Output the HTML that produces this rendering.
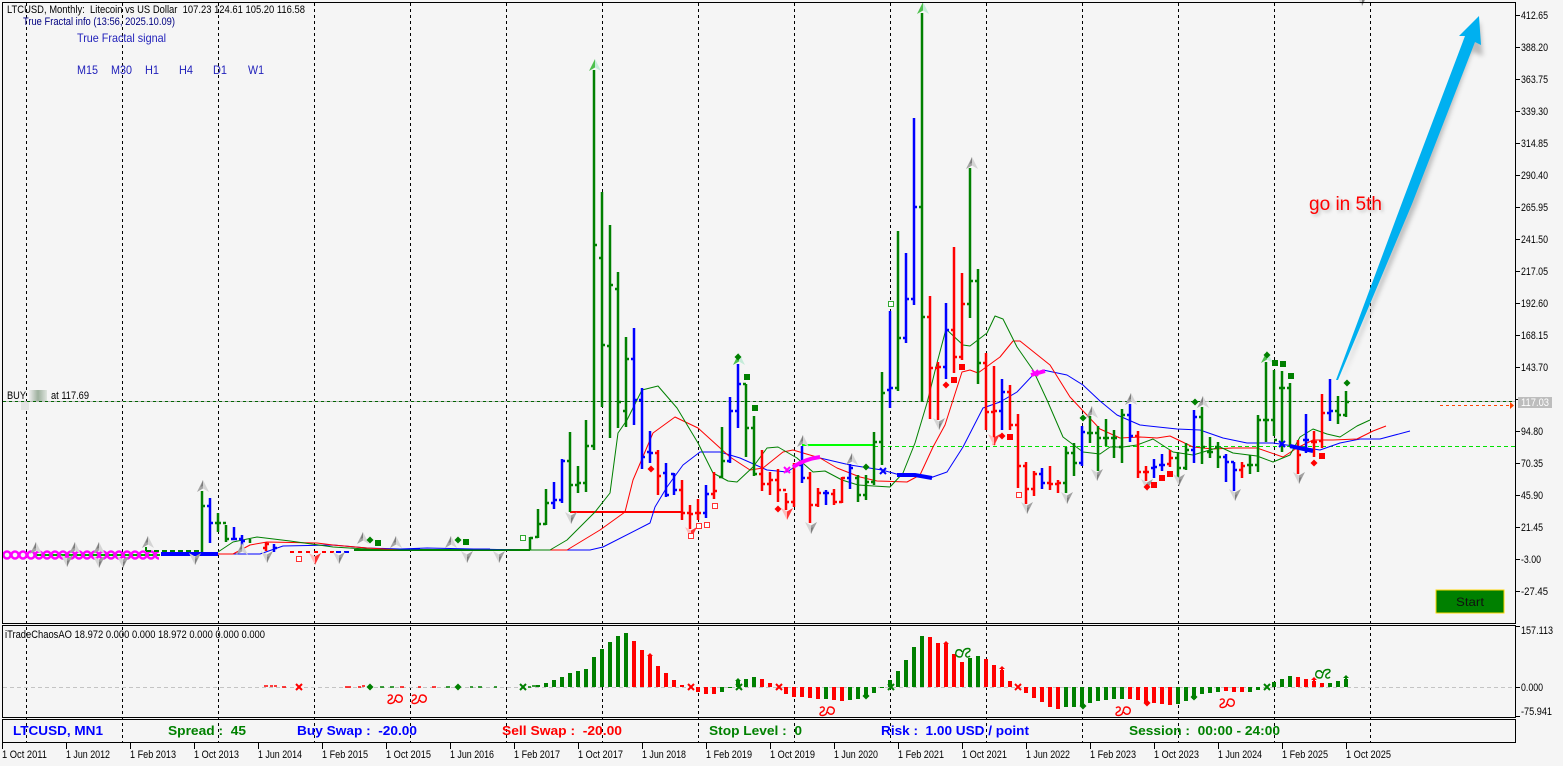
<!DOCTYPE html>
<html><head><meta charset="utf-8"><title>LTCUSD</title>
<style>
html,body{margin:0;padding:0;background:#f5f5f5}
svg{display:block}
text{font-family:"Liberation Sans",sans-serif;white-space:pre}
.a{font-size:11px;fill:#000}
.b{font-size:13px;font-weight:bold}
</style></head><body>
<svg width="1563" height="766" viewBox="0 0 1563 766" xmlns="http://www.w3.org/2000/svg">
<defs>
<g id="u"><polygon points="0,-6 -6,6 0,2.5" fill="#a4a4a4"/><polygon points="0,-6 6,6 0,2.5" fill="#d4d4d4"/><polygon points="0,-6 -2.5,1 0,0" fill="#7c7c7c"/></g>
<g id="d"><polygon points="0,6 -6,-6 0,-2.5" fill="#d4d4d4"/><polygon points="0,6 6,-6 0,-2.5" fill="#a0a0a0"/><polygon points="0,6 2.5,-1 0,0" fill="#7c7c7c"/></g>
<g id="ug"><polygon points="0,-6 -6,6 0,2.5" fill="#4cc04c"/><polygon points="0,-6 6,6 0,2.5" fill="#c4ecd8"/></g>
<g id="dr"><polygon points="0,6 -6,-6 0,-2.5" fill="#ffbcbc"/><polygon points="0,6 6,-6 0,-2.5" fill="#f33"/></g>
<polygon id="dm" points="0,-3.5 3.5,0 0,3.5 -3.5,0"/>
<rect id="sq" x="-3" y="-3" width="6" height="6"/>
<rect id="hs" x="-2.5" y="-2.5" width="5" height="5" fill="#fff" stroke-width="1"/>
<path id="q" d="M-7-3C-5-5-2-4-3-1-4 1-7 1-7 3-7 5-3 5-1 3 1 0 0-4 3-4 6-4 8-2 7 1 6 4 2 4 1 1" fill="none" stroke-width="1.4"/>
<path id="x" d="M-3-3L3 3M3-3L-3 3" fill="none" stroke-width="2"/>
<path id="ua" d="M0-4L3-1H1V3H-1V-1H-3Z"/>
<pattern id="c" width="8" height="12" patternUnits="userSpaceOnUse" x="3" y="549"><circle cx="4" cy="6" r="3.5" fill="none" stroke="#f0f" stroke-width="2.4"/></pattern>
<linearGradient id="g1" x1="0" x2="1"><stop offset="0" stop-color="#eee"/><stop offset=".5" stop-color="#9db09d"/><stop offset="1" stop-color="#dfe5df"/></linearGradient>
<filter id="bl" x="-20%" y="-20%" width="140%" height="140%"><feGaussianBlur stdDeviation="2.5"/></filter>
<filter id="bl2" x="-20%" y="-40%" width="140%" height="180%"><feGaussianBlur stdDeviation="1.5"/></filter>
</defs>

<rect width="1563" height="766" fill="#f5f5f5"/>

<!-- vertical grid -->
<path stroke="#000" stroke-width="1" stroke-dasharray="3 3" fill="none" d="M26.5 3V742M122.5 3V742M218.5 3V742M314.5 3V742M410.5 3V742M506.5 3V742M602.5 3V742M698.5 3V742M794.5 3V742M890.5 3V742M986.5 3V742M1082.5 3V742M1178.5 3V742M1274.5 3V742M1370.5 3V742"/>

<!-- horizontals -->
<path d="M3 401.5H1515" stroke="#b4b4b4" fill="none"/>
<path d="M3 401.5H1515" stroke="#006400" stroke-dasharray="3 3" fill="none"/>
<path d="M874 446.5H1515" stroke="#00e000" stroke-dasharray="4 3" fill="none"/>
<path d="M802 445H874" stroke="#0f0" stroke-width="2" fill="none"/>
<path d="M570 512H682" stroke="#f00" stroke-width="2" fill="none"/>
<path d="M1440 405.5H1510" stroke="#ff4500" stroke-dasharray="3 3" fill="none"/>
<polygon points="1510,402 1514,405.5 1510,409" fill="#ff4500"/>

<!-- flat section -->
<path d="M354 550H530" stroke="#008000" stroke-width="2" fill="none"/>

<!-- moving averages -->
<g fill="none" stroke-width="1" stroke-linejoin="round">
<path stroke="#0000ff" d="M218 554H260L283 546 333 545 367 548 400 549 427 548 520 550H590L603 547 650 523 655 507 667 487 683 465 700 452H720L740 458 767 470 787 472 802 462 820 458 850 465 882 470 900 475 930 478 947 472 963 447 983 408 1000 402 1017 392 1033 375 1043 370 1067 375 1083 385 1100 401 1117 415 1140 425 1177 429 1200 430 1223 438 1247 443H1273L1300 447 1320 450 1340 443 1360 439H1380L1410 431"/>
<path stroke="#ff0000" d="M218 554H233L250 545 267 542 317 543 333 545 367 548 400 550H540L567 550 600 530 625 512 633 480 653 433 675 417 698 428 730 457 750 470 763 468 783 452 793 450 820 458 837 468 860 477 877 481 907 482 920 475 933 447 945 425 962 372 970 370 978 373 1000 357 1013 341H1020L1050 365 1070 397 1100 429 1120 438 1140 437 1157 438 1170 436 1193 447 1213 449 1233 448H1257L1283 457 1297 448 1313 440H1333L1357 439 1373 431 1386 426"/>
<path stroke="#008000" d="M218 552L233 542 257 537 290 541 333 547 383 550H550L567 540 595 512 610 493 618 433 627 420 642 390 658 386 677 408 698 443 713 473 728 481 737 482 753 467 767 448 778 447 797 458 813 472 825 471 842 480 858 485 890 487 903 473 915 443 927 403 937 363 946 329 963 345 970 346 987 333 995 316 1003 319 1017 347 1033 370 1047 400 1063 437 1083 452 1100 454 1110 447H1123L1137 445 1153 439 1173 452 1193 455 1220 447 1233 453 1257 456 1273 462 1290 455 1300 437 1313 429 1327 434 1340 437 1357 426 1370 420"/>
</g>

<path d="M35 555H160" stroke="#0a0" stroke-width="2" fill="none"/>
<rect x="3" y="549" width="156" height="12" fill="url(#c)"/>
<path d="M161 554H218" stroke="#00f" stroke-width="4" fill="none"/>
<path d="M146 551H200" stroke="#008000" stroke-width="2" stroke-dasharray="5 3" fill="none"/>
<path d="M146 547V551" stroke="#008000" stroke-width="2" fill="none"/>
<path d="M290 552H336" stroke="#f00" stroke-width="2" stroke-dasharray="4 4" fill="none"/>
<path d="M336 552H350" stroke="#00f" stroke-width="2" stroke-dasharray="5 3" fill="none"/>
<path d="M400 549H420M470 549H490" stroke="#00f" stroke-width="1" fill="none"/>

<!-- OHLC bars -->
<g fill="none" stroke-width="2.5">
<path stroke="#008000" d="M202 491V552M202 506h3M218 513V532M215 523h3M218 523h3M226 525V542M223 523h3M226 539h3M250 539V543M530 537V550M530 538h3M538 509V538M535 537h3M538 524h3M546 489V525M543 524h3M546 503h3M570 432V512M567 461h3M570 485h3M578 466V493M575 485h3M578 483h3M586 420V492M583 483h3M586 446h3M594 70V450M591 446h3M594 245h3M602 192V407M599 258h3M602 345h3M610 225V438M607 346h3M610 285h3M618 272V428M615 289h3M618 402h3M626 337V427M623 411h3M626 359h3M722 427V478M719 477h3M722 461h3M746 384V457M743 384h3M746 428h3M754 416V476M751 428h3M754 474h3M858 475V502M855 478h3M858 495h3M866 475V500M863 495h3M866 482h3M874 432V485M871 482h3M874 442h3M882 372V465M879 442h3M882 393h3M898 231V391M895 388h3M898 338h3M922 13V402M919 207h3M922 317h3M970 168V318M967 304h3M970 281h3M978 269V384M975 281h3M978 363h3M1066 447V493M1063 483h3M1066 453h3M1074 443V476M1071 453h3M1074 463h3M1090 416V443M1087 433h3M1090 433h3M1098 426V471M1095 433h3M1098 438h3M1106 419V446M1103 438h3M1106 438h3M1114 430V458M1111 438h3M1114 438h3M1122 409V463M1119 447h3M1122 415h3M1178 452V477M1175 458h3M1178 468h3M1186 443V470M1183 468h3M1186 450h3M1202 407V464M1199 417h3M1202 447h3M1210 437V458M1207 452h3M1210 452h3M1218 442V468M1215 447h3M1218 457h3M1250 455V474M1247 465h3M1250 465h3M1258 415V472M1255 465h3M1258 420h3M1266 362V442M1263 420h3M1266 420h3M1274 370V436M1271 420h3M1274 440h3M1282 371V452M1279 388h3M1282 388h3M1290 383V447M1287 388h3M1290 447h3M1338 396V424M1335 411h3M1338 415h3M1346 391V417M1343 415h3M1346 402h3"/>
<path stroke="#0000ff" d="M210 498V543M207 506h3M210 523h3M234 527V540M231 539h3M234 539h3M242 535V546M239 539h3M242 541h3M274 544V552M274 548h3M554 482V509M551 503h3M554 500h3M562 459V503M559 500h3M562 461h3M634 328V425M631 359h3M634 400h3M642 388V469M639 400h3M642 457h3M650 431V463M647 452h3M650 453h3M666 463V497M663 473h3M666 495h3M674 473V495M671 474h3M674 490h3M706 485V518M703 513h3M706 494h3M730 397V463M727 461h3M730 411h3M738 364V428M735 411h3M738 384h3M802 446V483M799 465h3M802 478h3M826 490V505M823 493h3M826 493h3M850 464V489M847 478h3M850 468h3M890 311V408M887 390h3M890 388h3M906 253V343M903 338h3M906 299h3M914 118V305M911 299h3M914 207h3M946 303V379M943 367h3M946 330h3M1002 379V430M999 411h3M1002 392h3M1042 468V489M1039 474h3M1042 483h3M1082 426V466M1079 463h3M1082 432h3M1130 404V442M1127 415h3M1130 436h3M1154 459V478M1151 468h3M1154 467h3M1162 454V471M1159 465h3M1162 465h3M1194 410V463M1191 450h3M1194 417h3M1226 454V482M1223 457h3M1226 462h3M1234 462V491M1231 462h3M1234 470h3M1306 414V453M1303 440h3M1306 440h3M1330 379V421M1327 413h3M1330 411h3"/>
<path stroke="#ff0000" d="M266 542V551M263 548h3M266 544h3M658 450V495M655 453h3M658 476h3M682 480V520M679 490h3M682 513h3M690 505V529M687 513h3M690 514h3M698 499V520M695 513h3M698 513h3M714 472V499M711 494h3M714 491h3M762 450V491M759 474h3M762 484h3M770 472V495M767 484h3M770 480h3M778 469V502M775 480h3M778 490h3M786 493V510M783 490h3M786 502h3M794 463V507M791 502h3M794 465h3M810 472V523M807 478h3M810 505h3M818 488V507M815 505h3M818 493h3M834 489V505M831 494h3M834 502h3M842 477V503M839 502h3M842 478h3M930 296V419M927 317h3M930 368h3M938 362V420M935 368h3M938 367h3M954 247V373M951 330h3M954 357h3M962 273V360M959 357h3M962 304h3M986 353V430M983 363h3M986 412h3M994 366V445M991 412h3M994 411h3M1010 385V430M1007 392h3M1010 425h3M1018 414V488M1015 425h3M1018 466h3M1026 462V504M1023 466h3M1026 489h3M1034 471V496M1031 489h3M1034 474h3M1050 466V490M1047 483h3M1050 484h3M1058 480V493M1055 484h3M1058 483h3M1138 431V478M1135 436h3M1138 472h3M1146 466V481M1143 472h3M1146 472h3M1170 450V467M1167 464h3M1170 458h3M1242 462V478M1239 470h3M1242 466h3M1298 440V474M1295 447h3M1298 455h3M1314 431V457M1311 442h3M1314 442h3M1322 394V448M1319 441h3M1322 413h3"/>
</g>

<!-- thick highlights -->
<path d="M793 467Q805 459 820 457" stroke="#f0f" stroke-width="4" fill="none"/>
<use href="#x" x="787" y="470" stroke="#f0f"/>
<use href="#x" x="1035" y="373" stroke="#f0f"/>
<path d="M1031 375L1045 371" stroke="#f0f" stroke-width="4" fill="none"/>
<use href="#x" x="883" y="471" stroke="#00f"/>
<path d="M897 475H915L932 478" stroke="#00f" stroke-width="4" fill="none"/>
<use href="#x" x="1282" y="444" stroke="#00f"/>
<path d="M1290 446L1313 451" stroke="#00f" stroke-width="4" fill="none"/>

<!-- fractal arrows -->
<use href="#u" x="36" y="548"/><use href="#u" x="75" y="548"/><use href="#u" x="99" y="548"/><use href="#u" x="148" y="542"/><use href="#u" x="203" y="486"/><use href="#u" x="242" y="549"/><use href="#u" x="363" y="538"/><use href="#u" x="396" y="542"/><use href="#u" x="451" y="542"/><use href="#u" x="803" y="441"/><use href="#u" x="972" y="163"/><use href="#u" x="852" y="459"/><use href="#u" x="1092" y="412"/><use href="#u" x="1131" y="399"/><use href="#u" x="1203" y="402"/>
<use href="#d" x="67" y="561"/><use href="#d" x="99" y="562"/><use href="#d" x="123" y="562"/><use href="#d" x="195" y="559"/><use href="#d" x="267" y="557"/><use href="#d" x="339" y="558"/><use href="#d" x="467" y="557"/><use href="#d" x="499" y="557"/><use href="#d" x="571" y="518"/><use href="#d" x="811" y="528"/><use href="#d" x="939" y="424"/><use href="#d" x="1027" y="508"/><use href="#d" x="1067" y="498"/><use href="#d" x="1097" y="475"/><use href="#d" x="1147" y="485"/><use href="#d" x="1179" y="480"/><use href="#d" x="1235" y="495"/><use href="#d" x="1299" y="478"/><use href="#d" x="1362" y="0"/>
<use href="#ug" x="595" y="65"/><use href="#ug" x="923" y="8"/><use href="#ug" x="739" y="359"/><use href="#ug" x="1267" y="357"/>
<use href="#dr" x="315" y="559"/><use href="#dr" x="691" y="533"/><use href="#dr" x="787" y="514"/><use href="#dr" x="994" y="440"/>

<!-- markers -->
<g fill="#008000">
<use href="#dm" x="370" y="540"/><use href="#dm" x="458" y="540"/><use href="#dm" x="738" y="357"/><use href="#dm" x="866" y="467"/><use href="#dm" x="1083" y="418"/><use href="#dm" x="1195" y="402"/><use href="#dm" x="1267" y="355"/><use href="#dm" x="1347" y="383"/>
<use href="#sq" x="378" y="543"/><use href="#sq" x="466" y="542"/><use href="#sq" x="747" y="377"/><use href="#sq" x="755" y="408"/><use href="#sq" x="1275" y="363"/><use href="#sq" x="1283" y="364"/><use href="#sq" x="1291" y="376"/>
</g>
<g fill="#f00">
<use href="#dm" x="651" y="469"/><use href="#dm" x="778" y="509"/><use href="#dm" x="946" y="385"/><use href="#dm" x="1002" y="436"/><use href="#dm" x="1147" y="487"/><use href="#dm" x="1314" y="463"/>
<use href="#sq" x="954" y="380"/><use href="#sq" x="962" y="367"/><use href="#sq" x="1010" y="437"/><use href="#sq" x="1154" y="485"/><use href="#sq" x="1162" y="478"/><use href="#sq" x="1170" y="474"/><use href="#sq" x="1322" y="456"/>
</g>
<g stroke="#f33">
<use href="#hs" x="299" y="559"/><use href="#hs" x="691" y="536"/><use href="#hs" x="699" y="526"/><use href="#hs" x="707" y="525"/><use href="#hs" x="715" y="506"/><use href="#hs" x="1019" y="495"/>
</g>
<g stroke="#3a3">
<use href="#hs" x="523" y="538"/><use href="#hs" x="891" y="304"/>
</g>

<!-- AO histogram -->
<path d="M3 687.5H1515" stroke="#c4c4c4" stroke-dasharray="4 3" fill="none"/>
<g fill="none" stroke-width="4">
<path stroke="#008000" d="M538 687V685M546 687V683M554 687V680M562 687V677M570 687V673M578 687V671M586 687V669M594 687V657M602 687V649M610 687V642M618 687V636M626 687V633M722 687V692M730 687V688M738 687V680M746 687V679M754 687V677M826 687V699M850 687V700M858 687V699M866 687V695M874 687V693M882 687V688M890 687V680M898 687V671M906 687V660M914 687V647M922 687V636M970 687V658M978 687V656M1066 687V707M1074 687V707M1082 687V706M1090 687V703M1098 687V701M1106 687V700M1114 687V699M1122 687V699M1178 687V704M1186 687V701M1194 687V699M1202 687V694M1210 687V693M1218 687V692M1250 687V692M1258 687V690M1274 687V682M1282 687V679M1290 687V676M1330 687V683M1338 687V681M1346 687V679"/>
<path stroke="#ff0000" d="M634 687V641M642 687V650M650 687V655M658 687V666M666 687V673M674 687V680M682 687V685M698 687V692M706 687V694M714 687V694M762 687V679M770 687V683M786 687V694M794 687V697M802 687V697M810 687V698M818 687V699M834 687V700M842 687V701M930 687V637M938 687V643M946 687V644M954 687V654M962 687V662M986 687V659M994 687V665M1002 687V670M1010 687V681M1026 687V693M1034 687V698M1042 687V702M1050 687V707M1058 687V709M1130 687V699M1138 687V700M1146 687V703M1154 687V703M1162 687V704M1170 687V705M1226 687V691M1234 687V692M1242 687V692M1298 687V677M1306 687V679M1314 687V681M1322 687V683"/>
</g>
<path d="M264 686h4M270 686h3M274 686h3M282 687h4M345 687h6M358 687h3M362 686h3M400 687h4M418 687h3M432 687h4" stroke="#f00" fill="none" stroke-width="1.5"/>
<path d="M380 687h4M390 687h4M446 687h4M470 687h3M478 687h4M494 687h3M528 687h3M532 686h4" stroke="#008000" fill="none" stroke-width="1.5"/>
<g stroke="#f00"><use href="#x" x="299" y="687"/><use href="#x" x="691" y="687"/><use href="#x" x="779" y="687"/><use href="#x" x="1018" y="687"/></g>
<g stroke="#008000"><use href="#x" x="523" y="687"/><use href="#x" x="739" y="687"/><use href="#x" x="891" y="687"/><use href="#x" x="1267" y="687"/></g>
<g fill="#008000"><use href="#dm" x="370" y="687"/><use href="#dm" x="458" y="687"/><use href="#dm" x="866" y="696"/><use href="#dm" x="1083" y="706"/><use href="#dm" x="1194" y="697"/><use href="#ua" x="738" y="682"/><use href="#ua" x="1346" y="679"/></g>
<g fill="#f00"><use href="#ua" x="650" y="657"/><use href="#ua" x="946" y="645"/><use href="#ua" x="1002" y="670"/><use href="#ua" x="1314" y="681"/><use href="#dm" x="1147" y="703"/></g>
<g stroke="#f00"><use href="#q" x="395" y="699"/><use href="#q" x="419" y="699"/><use href="#q" x="827" y="711"/><use href="#q" x="1123" y="711"/><use href="#q" x="1227" y="703"/></g>
<g stroke="#008000"><use href="#q" transform="translate(963 653) rotate(180)"/><use href="#q" transform="translate(1323 674) rotate(180)"/></g>

<!-- frames -->
<g fill="none" stroke="#000" stroke-width="1">
<rect x="2.5" y="2.5" width="1513" height="621"/>
<rect x="2.5" y="625.5" width="1513" height="92"/>
<rect x="2.5" y="719.5" width="1513" height="23"/>
<path d="M1516 15.5h4M1516 47.5h4M1516 79.5h4M1516 111.5h4M1516 143.5h4M1516 175.5h4M1516 207.5h4M1516 239.5h4M1516 271.5h4M1516 303.5h4M1516 335.5h4M1516 367.5h4M1516 399.5h4M1516 431.5h4M1516 463.5h4M1516 495.5h4M1516 527.5h4M1516 559.5h4M1516 591.5h4M1516 626.5h4M1516 687.5h4M1516 716.5h4"/>
<path d="M2.5 743V749M66.5 743V749M130.5 743V749M194.5 743V749M258.5 743V749M322.5 743V749M386.5 743V749M450.5 743V749M514.5 743V749M578.5 743V749M642.5 743V749M706.5 743V749M770.5 743V749M834.5 743V749M898.5 743V749M962.5 743V749M1026.5 743V749M1090.5 743V749M1154.5 743V749M1218.5 743V749M1282.5 743V749M1346.5 743V749"/>
</g>

<!-- arrow -->
<polygon points="1340,384 1417,204 1472,52 1483,56 1480,22 1464,40 1470,44" fill="#777" opacity=".45" filter="url(#bl)"/>
<polygon points="1336,380 1403,200 1465,36 1459,36 1479,16 1481,45 1475,42 1412,204 1338,380" fill="#00b0f0"/>

<text x="1311" y="212" font-size="19" fill="#888" opacity=".5" filter="url(#bl2)">go in 5th</text>
<text x="1309" y="210" font-size="19" fill="#ff0000" textLength="73" lengthAdjust="spacingAndGlyphs">go in 5th</text>

<!-- top texts -->
<text class="a" x="7" y="13" textLength="298" lengthAdjust="spacingAndGlyphs">LTCUSD, Monthly:  Litecoin vs US Dollar  107.23 124.61 105.20 116.58</text>
<text class="a" x="23" y="25" textLength="152" lengthAdjust="spacingAndGlyphs" style="fill:#000080">True Fractal info (13:56, 2025.10.09)</text>
<g font-size="12" fill="#2222bb">
<text x="77" y="42" textLength="89" lengthAdjust="spacingAndGlyphs">True Fractal signal</text>
<text x="77" y="74" textLength="21" lengthAdjust="spacingAndGlyphs">M15</text>
<text x="111" y="74" textLength="21" lengthAdjust="spacingAndGlyphs">M30</text>
<text x="145" y="74" textLength="14" lengthAdjust="spacingAndGlyphs">H1</text>
<text x="179" y="74" textLength="14" lengthAdjust="spacingAndGlyphs">H4</text>
<text x="213" y="74" textLength="14" lengthAdjust="spacingAndGlyphs">D1</text>
<text x="248" y="74" textLength="16" lengthAdjust="spacingAndGlyphs">W1</text>
</g>
<rect x="29" y="390" width="18" height="11" fill="url(#g1)"/>
<rect x="21" y="402" width="8" height="8" fill="#e4e4e4"/>
<text class="a" x="7" y="399" textLength="19" lengthAdjust="spacingAndGlyphs">BUY</text>
<text class="a" x="51" y="399" textLength="38" lengthAdjust="spacingAndGlyphs">at 117.69</text>
<text class="a" x="5" y="638" textLength="260" lengthAdjust="spacingAndGlyphs">iTradeChaosAO 18.972 0.000 0.000 18.972 0.000 0.000 0.000</text>

<!-- price axis -->
<g>
<text class="a" x="1521" y="19" textLength="27" lengthAdjust="spacingAndGlyphs">412.65</text>
<text class="a" x="1521" y="51" textLength="27" lengthAdjust="spacingAndGlyphs">388.20</text>
<text class="a" x="1521" y="83" textLength="27" lengthAdjust="spacingAndGlyphs">363.75</text>
<text class="a" x="1521" y="115" textLength="27" lengthAdjust="spacingAndGlyphs">339.30</text>
<text class="a" x="1521" y="147" textLength="27" lengthAdjust="spacingAndGlyphs">314.85</text>
<text class="a" x="1521" y="179" textLength="27" lengthAdjust="spacingAndGlyphs">290.40</text>
<text class="a" x="1521" y="211" textLength="27" lengthAdjust="spacingAndGlyphs">265.95</text>
<text class="a" x="1521" y="243" textLength="27" lengthAdjust="spacingAndGlyphs">241.50</text>
<text class="a" x="1521" y="275" textLength="27" lengthAdjust="spacingAndGlyphs">217.05</text>
<text class="a" x="1521" y="307" textLength="27" lengthAdjust="spacingAndGlyphs">192.60</text>
<text class="a" x="1521" y="339" textLength="27" lengthAdjust="spacingAndGlyphs">168.15</text>
<text class="a" x="1521" y="371" textLength="27" lengthAdjust="spacingAndGlyphs">143.70</text>
<text class="a" x="1521" y="435" textLength="22" lengthAdjust="spacingAndGlyphs">94.80</text>
<text class="a" x="1521" y="467" textLength="22" lengthAdjust="spacingAndGlyphs">70.35</text>
<text class="a" x="1521" y="499" textLength="22" lengthAdjust="spacingAndGlyphs">45.90</text>
<text class="a" x="1521" y="531" textLength="22" lengthAdjust="spacingAndGlyphs">21.45</text>
<text class="a" x="1521" y="563" textLength="20" lengthAdjust="spacingAndGlyphs">-3.00</text>
<text class="a" x="1521" y="595" textLength="27" lengthAdjust="spacingAndGlyphs">-27.45</text>
<text class="a" x="1521" y="634" textLength="32" lengthAdjust="spacingAndGlyphs">157.113</text>
<text class="a" x="1521" y="691" textLength="22" lengthAdjust="spacingAndGlyphs">0.000</text>
<text class="a" x="1521" y="715" textLength="31" lengthAdjust="spacingAndGlyphs">-75.941</text>
</g>
<rect x="1518" y="397" width="34" height="11" fill="#bdbdbd"/>
<text x="1521" y="406" font-size="11" fill="#fff" textLength="28" lengthAdjust="spacingAndGlyphs">117.03</text>

<!-- start button -->
<rect x="1436" y="590" width="68" height="23" fill="#008000" stroke="#ffd700" stroke-width="1"/>
<text x="1456" y="606" font-size="12" fill="#111" textLength="28" lengthAdjust="spacingAndGlyphs">Start</text>

<!-- info panel -->
<text class="b" x="13" y="735" fill="#0000ff" textLength="90" lengthAdjust="spacingAndGlyphs">LTCUSD, MN1</text>
<text class="b" x="168" y="735" fill="#008000" textLength="78" lengthAdjust="spacingAndGlyphs">Spread :  45</text>
<text class="b" x="297" y="735" fill="#0000ff" textLength="120" lengthAdjust="spacingAndGlyphs">Buy Swap :  -20.00</text>
<text class="b" x="502" y="735" fill="#ff0000" textLength="120" lengthAdjust="spacingAndGlyphs">Sell Swap :  -20.00</text>
<text class="b" x="709" y="735" fill="#008000" textLength="93" lengthAdjust="spacingAndGlyphs">Stop Level :  0</text>
<text class="b" x="881" y="735" fill="#0000ff" textLength="148" lengthAdjust="spacingAndGlyphs">Risk :  1.00 USD / point</text>
<text class="b" x="1129" y="735" fill="#008000" textLength="151" lengthAdjust="spacingAndGlyphs">Session :  00:00 - 24:00</text>

<!-- time axis -->
<text class="a" x="2" y="758" textLength="45" lengthAdjust="spacingAndGlyphs">1 Oct 2011</text>
<text class="a" x="66" y="758" textLength="44" lengthAdjust="spacingAndGlyphs">1 Jun 2012</text>
<text class="a" x="130" y="758" textLength="46" lengthAdjust="spacingAndGlyphs">1 Feb 2013</text>
<text class="a" x="194" y="758" textLength="45" lengthAdjust="spacingAndGlyphs">1 Oct 2013</text>
<text class="a" x="258" y="758" textLength="44" lengthAdjust="spacingAndGlyphs">1 Jun 2014</text>
<text class="a" x="322" y="758" textLength="46" lengthAdjust="spacingAndGlyphs">1 Feb 2015</text>
<text class="a" x="386" y="758" textLength="45" lengthAdjust="spacingAndGlyphs">1 Oct 2015</text>
<text class="a" x="450" y="758" textLength="44" lengthAdjust="spacingAndGlyphs">1 Jun 2016</text>
<text class="a" x="514" y="758" textLength="46" lengthAdjust="spacingAndGlyphs">1 Feb 2017</text>
<text class="a" x="578" y="758" textLength="45" lengthAdjust="spacingAndGlyphs">1 Oct 2017</text>
<text class="a" x="642" y="758" textLength="44" lengthAdjust="spacingAndGlyphs">1 Jun 2018</text>
<text class="a" x="706" y="758" textLength="46" lengthAdjust="spacingAndGlyphs">1 Feb 2019</text>
<text class="a" x="770" y="758" textLength="45" lengthAdjust="spacingAndGlyphs">1 Oct 2019</text>
<text class="a" x="834" y="758" textLength="44" lengthAdjust="spacingAndGlyphs">1 Jun 2020</text>
<text class="a" x="898" y="758" textLength="46" lengthAdjust="spacingAndGlyphs">1 Feb 2021</text>
<text class="a" x="962" y="758" textLength="45" lengthAdjust="spacingAndGlyphs">1 Oct 2021</text>
<text class="a" x="1026" y="758" textLength="44" lengthAdjust="spacingAndGlyphs">1 Jun 2022</text>
<text class="a" x="1090" y="758" textLength="46" lengthAdjust="spacingAndGlyphs">1 Feb 2023</text>
<text class="a" x="1154" y="758" textLength="45" lengthAdjust="spacingAndGlyphs">1 Oct 2023</text>
<text class="a" x="1218" y="758" textLength="44" lengthAdjust="spacingAndGlyphs">1 Jun 2024</text>
<text class="a" x="1282" y="758" textLength="46" lengthAdjust="spacingAndGlyphs">1 Feb 2025</text>
<text class="a" x="1346" y="758" textLength="45" lengthAdjust="spacingAndGlyphs">1 Oct 2025</text>
</svg>
</body></html>
